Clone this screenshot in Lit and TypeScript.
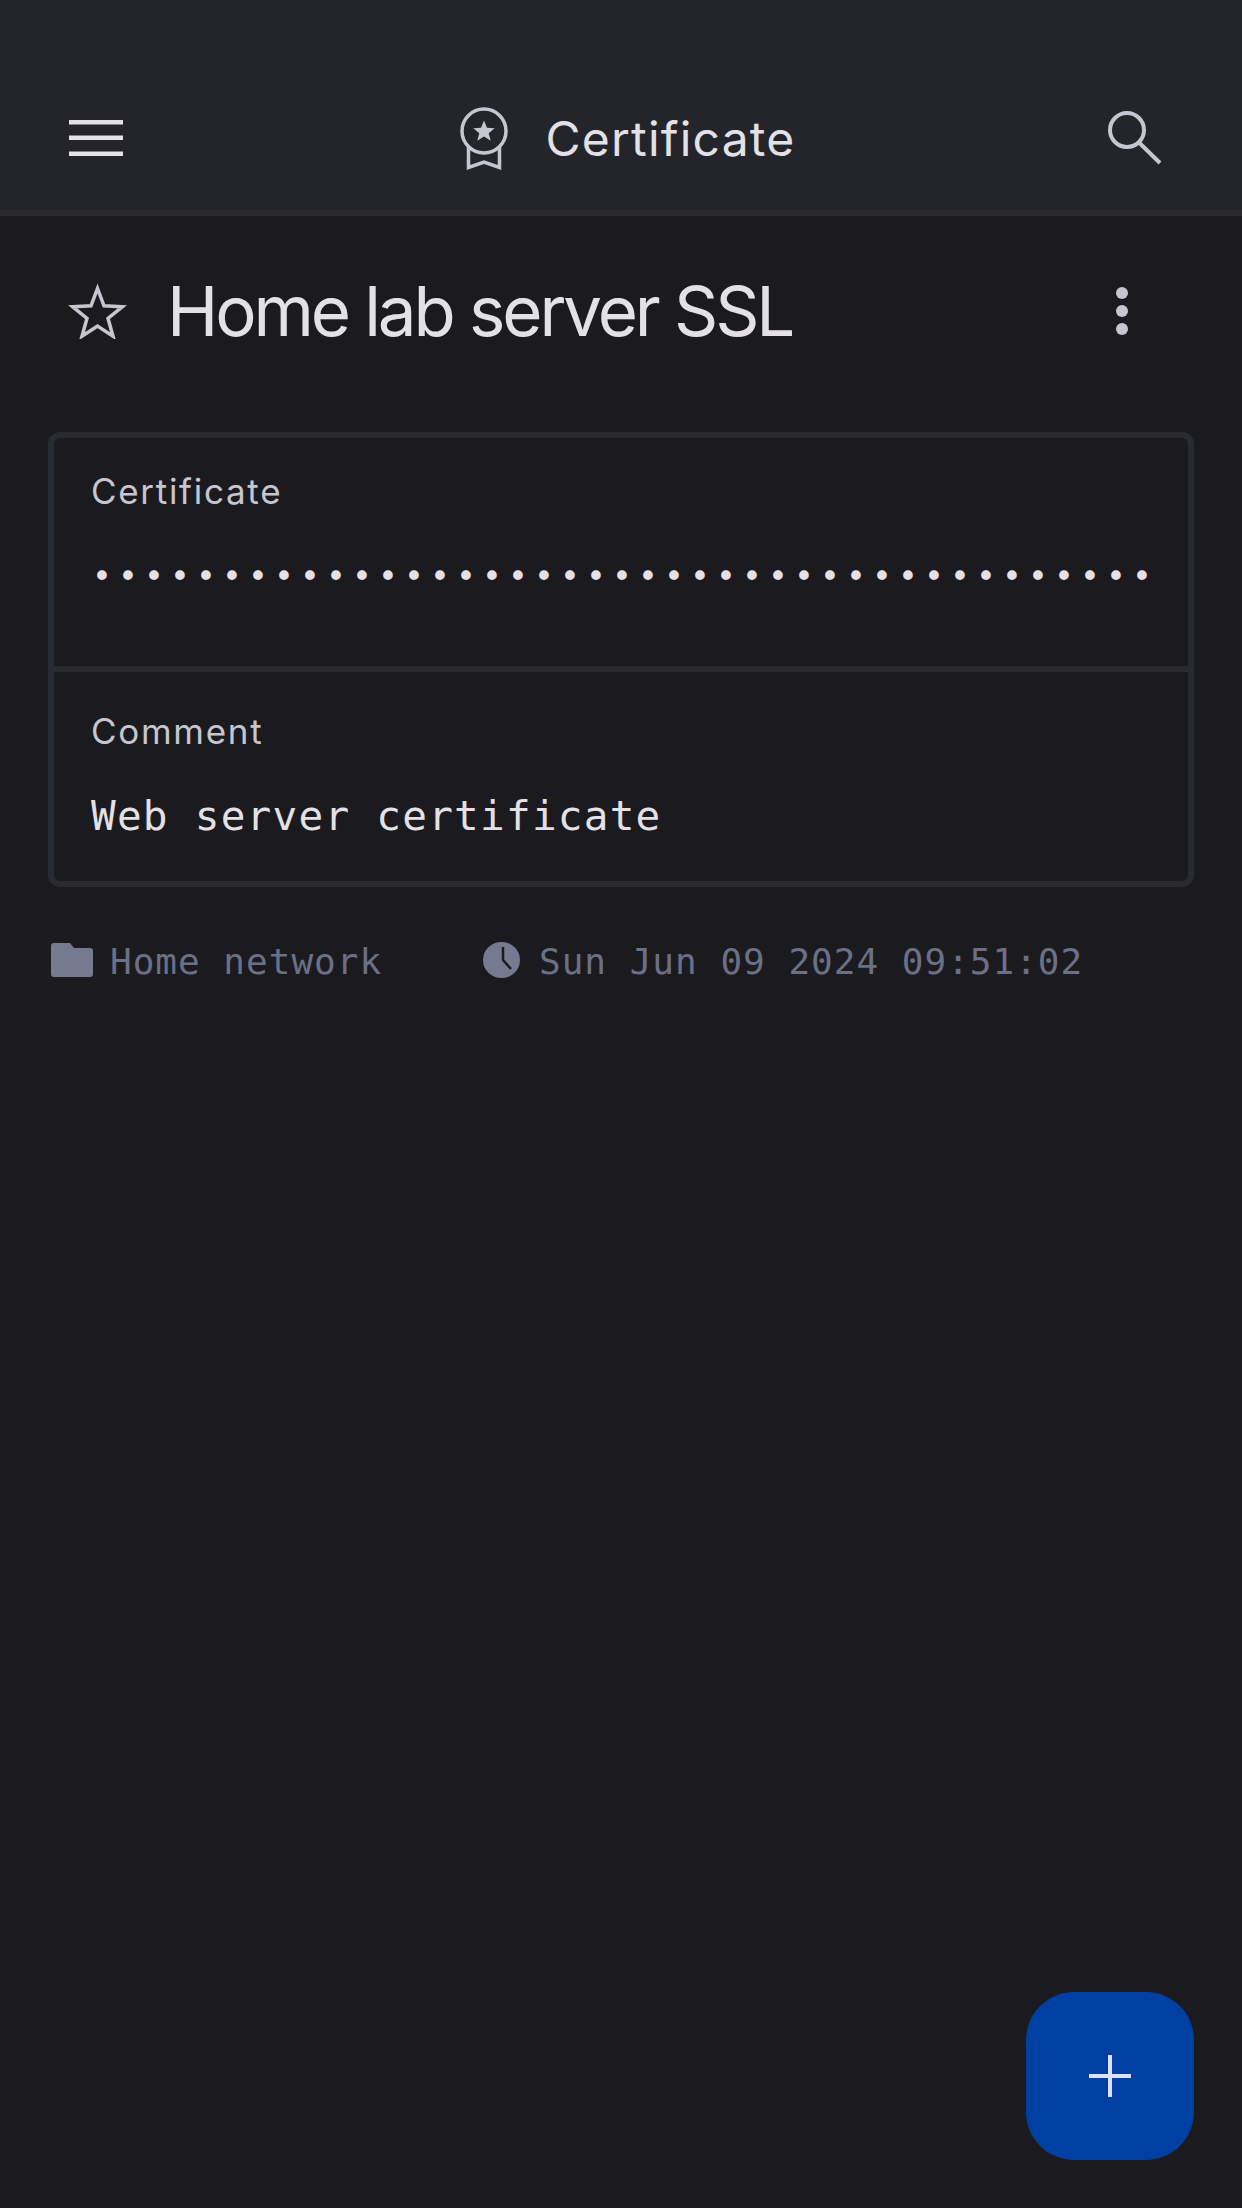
import { LitElement, html, css, unsafeCSS } from "lit";
import { customElement } from "lit/decorators.js";

const mono = unsafeCSS(`"DejaVu Sans Mono", "Liberation Mono", monospace`);

@customElement("app-root")
export class AppRoot extends LitElement {
  static styles = css`
    :host { display: block; min-height: 2208px; background: #1b1b1f; color: #e4e1e6; font-family: Inter, "Liberation Sans", sans-serif; position: relative; overflow: hidden; }
    svg { display: block; flex: none; }
    .top { box-sizing: border-box; height: 216px; padding: 66px 80px 0 69px; background: #23252a; border-bottom: 6px solid #282b30; display: flex; align-items: center; justify-content: space-between; }
    .brand { display: flex; align-items: center; gap: 38px; margin-left: 24px; }
    .brand span { font-size: 48px; letter-spacing: 1.2px; line-height: 60px; padding-top: 2px; }
    .head { display: flex; align-items: center; height: 126px; margin-top: 32px; padding: 0 0 0 68px; }
    .head h1 { margin: 0 0 0 40px; font-size: 69px; font-weight: 400; letter-spacing: -3.1px; line-height: 80px; flex: 1; }
    .kebab { margin-right: 114px; }
    .card { box-sizing: border-box; margin: 58px 48px 0; height: 455px; border: 6px solid #282c32; border-radius: 12px; }
    .sec { padding: 0 37px; overflow: hidden; }
    .sec.a { height: 197px; padding: 31px 27px 0 37px; border-bottom: 6px solid #282c32; }
    .sec.b { padding-top: 37px; }
    .label { font-size: 35px; line-height: 44px; letter-spacing: 1.7px; color: #c6c6d0; }
    .value { font-family: ${mono}; font-size: 41px; line-height: 48px; letter-spacing: 1.25px; white-space: nowrap; overflow: hidden; }
    .a .value { margin: 40px 0 0 1px; font-size: 33px; letter-spacing: 6.13px; }
    .b .value { margin-top: 39px; }
    .meta { display: flex; align-items: center; margin: 50px 48px 0 51px; color: #6c7086; height: 50px; }
    .meta span { font-family: ${mono}; font-size: 36px; letter-spacing: 1px; line-height: 50px; white-space: nowrap; }
    .meta svg { margin-bottom: 5px; }
    .m1 { margin-left: 17px; width: 270px; }
    .meta .clock { margin-left: 103px; }
    .m2 { margin-left: 19px; }
    .fab { position: absolute; left: 1026px; top: 1992px; width: 168px; height: 168px; border-radius: 48px; background: #0040a3; display: flex; align-items: center; justify-content: center; }
  `;

  render() {
    return html`
      <div class="top">
        <svg width="54" height="36" viewBox="0 0 54 36" fill="#e4e1e6"><rect width="54" height="4.5"/><rect y="15.5" width="54" height="4.5"/><rect y="31.5" width="54" height="4.5"/></svg>
        <div class="brand">
          <svg width="48" height="63" viewBox="0 0 48 63" fill="none" stroke="#c6c6d0" stroke-width="3.5">
            <circle cx="24" cy="24" r="22"/>
            <path d="M8.500 40V60.500L24 55L39.500 60.500V40"/>
            <path d="M24 13.500l3 7.300 7.700.5-6 4.900 2 7.500L24 29.500l-6.700 4.200 2-7.500-6-4.900 7.700-.5z" fill="#c6c6d0" stroke="none"/>
          </svg>
          <span>Certificate</span>
        </div>
        <svg width="54" height="54" viewBox="0 0 54 54" fill="none" stroke="#c6c6d0" stroke-width="4"><circle cx="19" cy="19" r="17"/><path d="M31 31.500L52 52"/></svg>
      </div>
      <div class="head">
        <svg width="59" height="56" viewBox="0 0 59 56" fill="none" stroke="#c6c6d0" stroke-width="3.500"><path d="M29.500 5.500l6.500 17.300 18.500.9-14.500 11.600 5 17.900-15.500-10.200-15.500 10.200 5-17.900-14.500-11.600 18.500-.9z"/></svg>
        <h1>Home lab server SSL</h1>
        <svg class="kebab" width="12" height="48" viewBox="0 0 12 48" fill="#c6c6d0"><circle cx="6" cy="6" r="6"/><circle cx="6" cy="24" r="6"/><circle cx="6" cy="42" r="6"/></svg>
      </div>
      <div class="card">
        <div class="sec a">
          <div class="label">Certificate</div>
          <div class="value">${"•".repeat(41)}</div>
        </div>
        <div class="sec b">
          <div class="label">Comment</div>
          <div class="value">Web server certificate</div>
        </div>
      </div>
      <div class="meta">
        <svg width="42" height="34" viewBox="0 0 42 34" fill="#767a90"><path d="M3 0h16l4 5h16a3 3 0 0 1 3 3v23a3 3 0 0 1-3 3H3a3 3 0 0 1-3-3V3a3 3 0 0 1 3-3z"/></svg>
        <span class="m1">Home network</span>
        <svg class="clock" width="37" height="36" viewBox="0 0 37 36"><ellipse cx="18.500" cy="18" rx="18.500" ry="18" fill="#767a90"/><path d="M20 5V18L28 27" fill="none" stroke="#1b1b1f" stroke-width="2.500"/></svg>
        <span class="m2">Sun Jun 09 2024 09:51:02</span>
      </div>
      <div class="fab">
        <svg width="42" height="42" viewBox="0 0 42 42" fill="#dbe1ff"><rect x="19" width="4" height="42"/><rect y="19" width="42" height="4"/></svg>
      </div>
    `;
  }
}
